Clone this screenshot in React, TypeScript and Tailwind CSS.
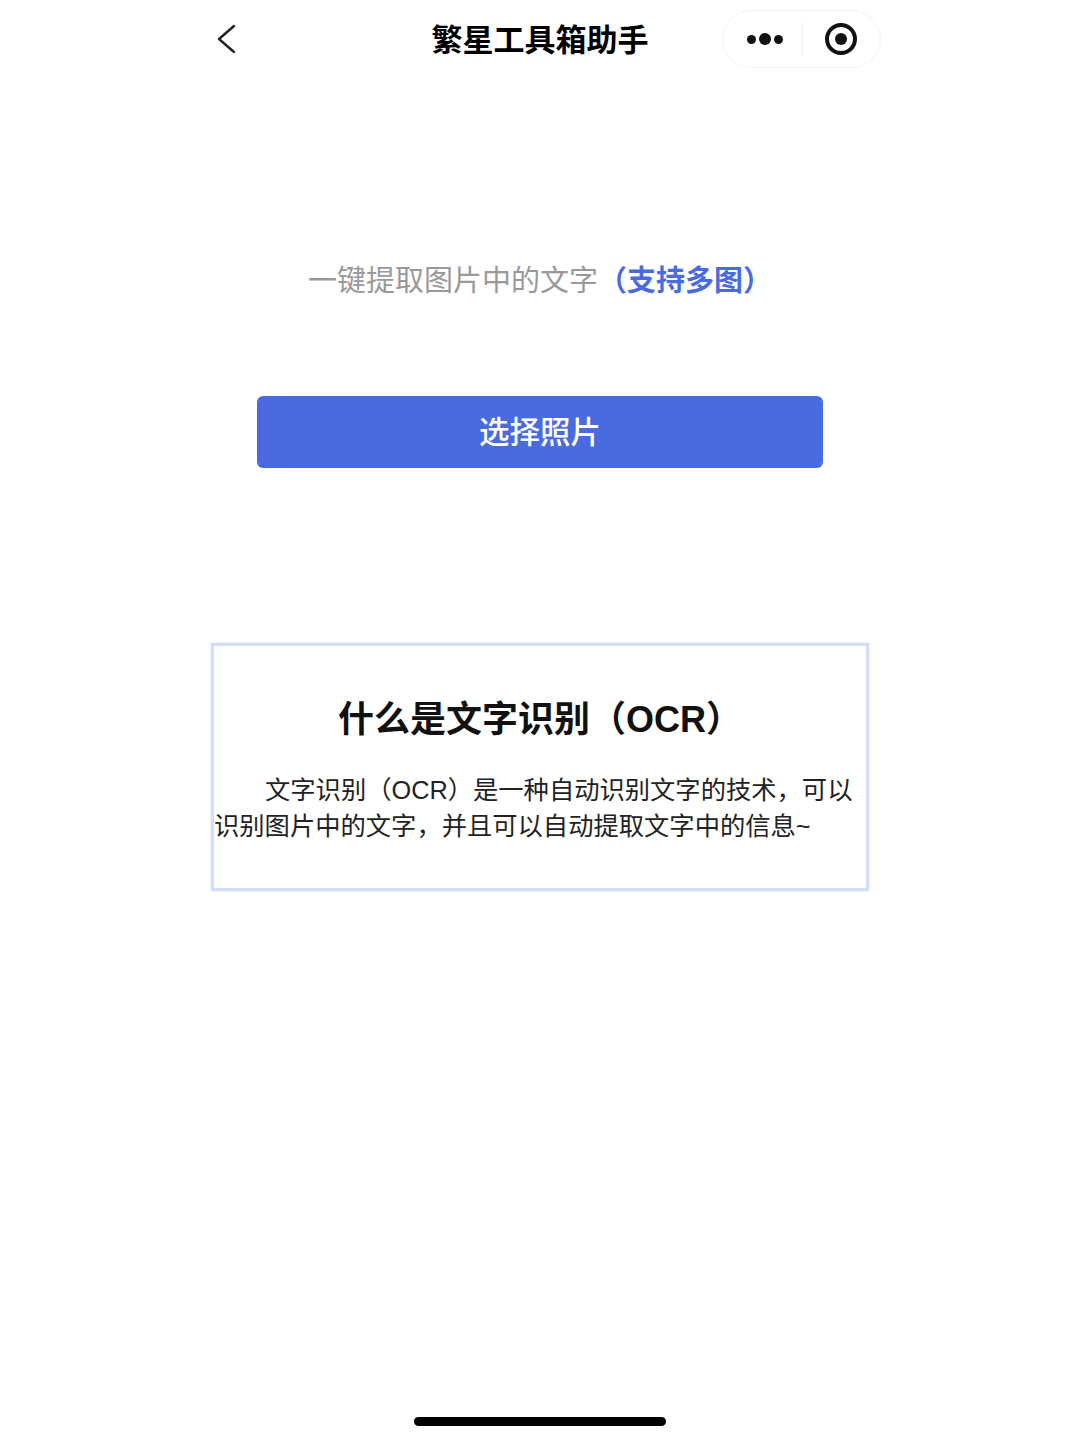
const fontStack = "font-['Liberation_Sans','Noto_Sans_CJK_SC',sans-serif]";

// Full-width punctuation, kept as escapes so it survives editing
const LP = '\uFF08';
const RP = '\uFF09';
const COMMA = '\uFF0C';

function NavBar() {
  return (
    <div className="relative flex h-[78px] items-center justify-between pl-[217px] pr-[199px]">
      <svg width="21" height="32" viewBox="0 0 21 32" fill="none" className="mb-[1px]">
        <path d="M17 3 L2 16 L17 29" stroke="#222222" strokeWidth="2.4" strokeLinecap="round" strokeLinejoin="round" />
      </svg>
      {/* Title stays centered on the page, whatever the capsule width */}
      <div className="absolute inset-x-0 top-[21px] text-center text-[31px] font-bold leading-[40px] text-black">
        繁星工具箱助手
      </div>
      <div className="flex h-[58px] w-[159px] items-center rounded-full border border-[#f3f3f3] bg-white">
        <div className="flex w-[79px] items-center justify-center gap-[3px] pl-[4px]">
          <span className="h-[9px] w-[9px] rounded-full bg-[#111111]" />
          <span className="h-[12px] w-[12px] rounded-full bg-[#111111]" />
          <span className="h-[9px] w-[9px] rounded-full bg-[#111111]" />
        </div>
        <div className="h-[34px] w-px bg-[#eeeeee]" />
        <div className="flex flex-1 items-center justify-center pr-[2px]">
          <div className="flex h-[32px] w-[32px] items-center justify-center rounded-full border-[4px] border-[#111111]">
            <span className="h-[12px] w-[12px] rounded-full bg-[#111111]" />
          </div>
        </div>
      </div>
    </div>
  );
}

function App() {
  return (
    <div className={`flex h-[1440px] w-[1080px] flex-col bg-white ${fontStack}`}>
      <NavBar />

      <div className="mt-[185px] text-center text-[29px] leading-[36px] text-[#999999]">
        一键提取图片中的文字
        <span className="font-bold text-[#4a6ae0]">{`${LP}支持多图${RP}`}</span>
      </div>

      <button className="mx-auto mt-[97px] h-[72px] w-[566px] rounded-[6px] bg-[#4a6ae0] pt-[1px] text-[30.5px] font-medium text-white">
        选择照片
      </button>

      <div className="mx-auto mt-[175px] h-[248px] w-[658px] border-[3px] border-[#d3dcf8] pt-[52px] shadow-[0_0_2px_#d3dcf8]">
        <h2 className="text-center text-[36px] font-bold leading-[44px] text-[#111111]">
          {`什么是文字识别${LP}OCR${RP}`}
        </h2>
        <p className="mt-[30px] indent-[51px] text-[25.3px] leading-[36px] text-[#222222]">
          {`文字识别${LP}OCR${RP}是一种自动识别文字的技术${COMMA}可以识别图片中的文字${COMMA}并且可以自动提取文字中的信息~`}
        </p>
      </div>

      <div className="mx-auto mb-[14px] mt-auto h-[9px] w-[252px] rounded-full bg-black" />
    </div>
  );
}

export default App;
